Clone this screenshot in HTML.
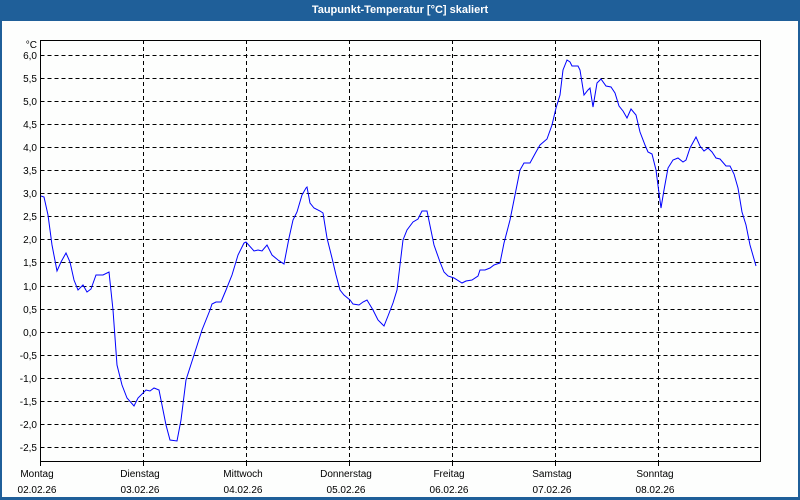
<!DOCTYPE html>
<html><head><style>
body{margin:0;width:800px;height:500px;overflow:hidden;background:#fff;font-family:"Liberation Sans",sans-serif}
</style></head><body>
<svg width="800" height="500" xmlns="http://www.w3.org/2000/svg" style="position:absolute;left:0;top:0">
<rect x="0" y="0" width="800" height="500" fill="#1f5f99"/>
<rect x="2" y="21" width="796" height="476" fill="#fdfefd"/>
<text x="400" y="13" fill="#fff" font-size="11" font-weight="bold" text-anchor="middle" font-family="Liberation Sans,sans-serif">Taupunkt-Temperatur [°C] skaliert</text>
<g stroke="#000" stroke-width="1" stroke-dasharray="4,3" fill="none">
<path d="M40.5 55.5H760M40.5 78.5H760M40.5 101.5H760M40.5 124.5H760M40.5 147.5H760M40.5 170.5H760M40.5 193.5H760M40.5 216.5H760M40.5 239.5H760M40.5 262.5H760M40.5 286.5H760M40.5 309.5H760M40.5 332.5H760M40.5 355.5H760M40.5 378.5H760M40.5 401.5H760M40.5 424.5H760M40.5 447.5H760"/>
<path d="M143.5 40V461M246.5 40V461M349.5 40V461M452.5 40V461M555.5 40V461M658.5 40V461"/>
</g>
<rect x="40.5" y="40.5" width="720" height="421" fill="none" stroke="#000"/>
<path d="M40.5 50V55.5M143.5 461V466M246.5 461V466M349.5 461V466M452.5 461V466M555.5 461V466M658.5 461V466M40.5 461V466" stroke="#000"/>
<g font-size="10" fill="#000" text-anchor="end" font-family="Liberation Sans,sans-serif">
<text x="37" y="48">°C</text>
<text x="37" y="59">6,0</text><text x="37" y="82">5,5</text><text x="37" y="105">5,0</text><text x="37" y="128">4,5</text><text x="37" y="151">4,0</text><text x="37" y="174">3,5</text><text x="37" y="197">3,0</text><text x="37" y="220">2,5</text><text x="37" y="243">2,0</text><text x="37" y="266">1,5</text><text x="37" y="290">1,0</text><text x="37" y="313">0,5</text><text x="37" y="336">0,0</text><text x="37" y="359">-0,5</text><text x="37" y="382">-1,0</text><text x="37" y="405">-1,5</text><text x="37" y="428">-2,0</text><text x="37" y="451">-2,5</text>
</g>
<g font-size="10" fill="#000" text-anchor="middle" font-family="Liberation Sans,sans-serif">
<text x="37" y="477">Montag</text><text x="37" y="493">02.02.26</text>
<text x="140" y="477">Dienstag</text><text x="140" y="493">03.02.26</text>
<text x="243" y="477">Mittwoch</text><text x="243" y="493">04.02.26</text>
<text x="346" y="477">Donnerstag</text><text x="346" y="493">05.02.26</text>
<text x="449" y="477">Freitag</text><text x="449" y="493">06.02.26</text>
<text x="552" y="477">Samstag</text><text x="552" y="493">07.02.26</text>
<text x="655" y="477">Sonntag</text><text x="655" y="493">08.02.26</text>
</g>
<polyline fill="none" stroke="#0000ff" stroke-width="1" points="41,196 44,197 48,215 52,245 57,271 61,262 66,253 70,262 74,280 78,290 83,285 87,292 91,289 96,275 103,275 109,272 113,310 117,365 122,385 127,398 134,406 138,398 146,390 150,391 154,388 159,390 166,425 170,440 177,441 181,420 186,380 194,355 202,330 210,310 212,304 216,302 221,302 226,290 232,275 238,255 244,243 246,242 254,251 258,250 262,251 267,245 272,255 278,260 284,264 289,238 293,220 297,212 302,195 306,188 307,187 310,203 314,208 320,211 323,213 327,238 332,258 336,275 340,290 344,295 350,300 353,304 359,305 363,302 367,300 373,310 378,320 384,326 388,316 393,303 397,290 400,265 403,240 407,230 413,222 418,219 422,211 427,211 434,245 440,262 444,272 448,276 454,278 462,283 466,281 472,280 478,276 480,270 485,270 490,268 494,265 500,263 504,243 510,220 516,190 520,170 524,163 530,163 536,152 540,145 547,139 552,125 556,108 560,95 563,70 567,60 570,62 572,66 578,66 580,70 584,95 588,90 590,88 593,107 597,83 601,79 606,86 611,87 615,93 619,106 623,111 627,118 631,109 636,115 640,132 645,145 648,152 652,154 656,170 659,193 661,208 664,190 668,168 673,160 678,158 683,162 686,160 690,148 696,137 700,146 704,151 708,148 712,152 716,158 720,159 726,166 730,166 734,174 738,188 742,212 746,225 750,245 756,266"/>
</svg>
</body></html>
